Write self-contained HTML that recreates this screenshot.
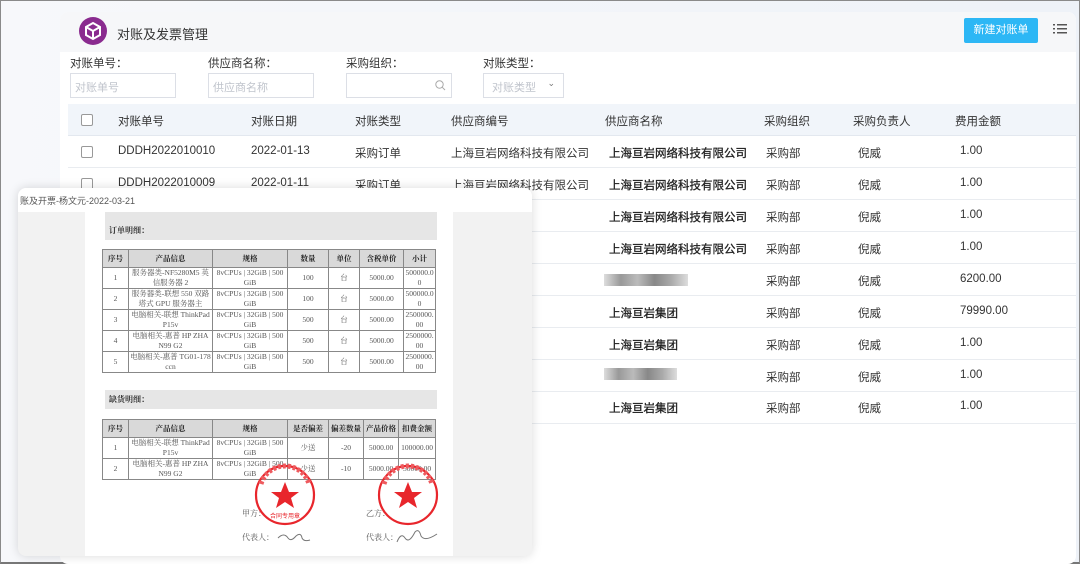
<!DOCTYPE html>
<html><head><meta charset="utf-8">
<style>
*{margin:0;padding:0;box-sizing:border-box}
body{width:1080px;height:564px;overflow:hidden;font-family:"Liberation Sans","Noto Sans CJK SC",sans-serif;background:#eef1f6;position:relative;color:#333}
.frame{position:absolute;inset:0;border:1px solid #8a8a8a;border-bottom:2px solid #777;background:linear-gradient(90deg,#f7f8fb,#eef2f8)}
.card{position:absolute;left:60px;top:12px;width:1016px;height:552px;background:#fff;border-radius:8px}
.hdr{position:absolute;left:0;top:0;width:1016px;height:40px;background:#f6f7f9;border-radius:8px 8px 0 0}
.a{position:absolute;white-space:nowrap}
.t{font-size:11.5px;color:#333}
.b{color:#222;-webkit-text-stroke:0.3px #222}
.inp{position:absolute;top:73px;height:25px;border:1px solid #dcdfe6;background:#fff;font-size:11px;color:#c0c4cc;padding:5px 4px}
.th{position:absolute;left:68px;top:104px;width:1008px;height:32px;background:#f1f5fa;border-bottom:1px solid #e3e8ef}
.row{position:absolute;left:68px;width:1008px;height:1px;background:#e9ecf0}
.cb{position:absolute;left:81px;width:12px;height:12px;border:1px solid #999;border-radius:2px;background:#fff}
.pop{position:absolute;left:18px;top:188px;width:514px;height:368px;background:#f2f2f2;border-radius:8px;box-shadow:0 0 10px rgba(0,0,0,.15);overflow:hidden}
.ptitle{position:absolute;left:0;top:0;width:514px;height:24px;background:#fff;font-size:9px;color:#555;padding:6px 2px}
.page{position:absolute;left:67px;top:24px;width:368px;height:344px;background:#fff}
table{border-collapse:collapse;position:absolute;font-family:"Liberation Serif","Noto Serif CJK SC",serif;font-size:7.5px;color:#555;table-layout:fixed}
td{border:1px solid #888;text-align:center;line-height:10px;padding:0 1px;word-break:break-all}
tr.h td{background:#d9d9d9;font-weight:bold;color:#222;height:18px}
.band{position:absolute;left:20px;width:332px;background:#e6e6e6;font-size:8px;font-weight:bold;color:#333;padding-left:4px;font-family:"Liberation Serif","Noto Serif CJK SC",serif}
.blur{position:absolute;height:12px;background:linear-gradient(90deg,#ddd,#999 20%,#bbb 40%,#888 60%,#aaa 80%,#ddd)}
</style></head><body>
<div class="frame"></div>
<div class="card">
 <div class="hdr"></div>
</div>
<svg class="a" style="left:79px;top:17px" width="28" height="28" viewBox="0 0 28 28"><circle cx="14" cy="14" r="14" fill="#8a2b8f"/><path d="M14 6 L21 10 L21 18 L14 22 L7 18 L7 10 Z" fill="none" stroke="#fff" stroke-width="2"/><path d="M7 10 L14 14 L21 10 M14 14 L14 22" stroke="#fff" stroke-width="2" fill="none"/></svg>
<div class="a" style="left:117px;top:24px;font-size:13px;color:#333">对账及发票管理</div>
<div class="a" style="left:964px;top:18px;width:74px;height:25px;background:#2db7f5;border-radius:2px;color:#fff;font-size:11px;text-align:center;line-height:25px">新建对账单</div>
<svg class="a" style="left:1053px;top:23px" width="14" height="12"><g fill="#555"><rect x="0" y="1" width="2" height="1.5"/><rect x="4" y="1" width="10" height="1.5"/><rect x="0" y="5" width="2" height="1.5"/><rect x="4" y="5" width="10" height="1.5"/><rect x="0" y="9" width="2" height="1.5"/><rect x="4" y="9" width="10" height="1.5"/></g></svg>

<div class="a t" style="left:70px;top:55px">对账单号：</div>
<div class="a t" style="left:208px;top:55px">供应商名称：</div>
<div class="a t" style="left:346px;top:55px">采购组织：</div>
<div class="a t" style="left:483px;top:55px">对账类型：</div>
<div class="inp" style="left:70px;width:106px">对账单号</div>
<div class="inp" style="left:208px;width:106px">供应商名称</div>
<div class="inp" style="left:346px;width:106px"><svg style="position:absolute;right:5px;top:6px" width="11" height="11"><circle cx="4.5" cy="4.5" r="3.7" fill="none" stroke="#aaa"/><path d="M7.3 7.3 L10 10" stroke="#aaa"/></svg></div>
<div class="inp" style="left:483px;width:81px;padding-left:8px">对账类型<span style="position:absolute;right:8px;top:4px;color:#777;font-size:9px">⌄</span></div>

<div class="th"></div>
<div class="cb" style="top:114px"></div>
<div class="a t" style="left:118px;top:113px">对账单号</div>
<div class="a t" style="left:251px;top:113px">对账日期</div>
<div class="a t" style="left:355px;top:113px">对账类型</div>
<div class="a t" style="left:451px;top:113px">供应商编号</div>
<div class="a t" style="left:605px;top:113px">供应商名称</div>
<div class="a t" style="left:764px;top:113px">采购组织</div>
<div class="a t" style="left:853px;top:113px">采购负责人</div>
<div class="a t" style="left:955px;top:113px">费用金额</div>

<div class="row" style="top:167px"></div><div class="row" style="top:199px"></div><div class="row" style="top:231px"></div><div class="row" style="top:263px"></div><div class="row" style="top:295px"></div><div class="row" style="top:327px"></div><div class="row" style="top:359px"></div><div class="row" style="top:391px"></div><div class="row" style="top:423px"></div>
<div class="cb" style="top:146px"></div>
<div class="a t" style="left:118px;top:145px">DDDH2022010010</div>
<div class="a t" style="left:251px;top:145px">2022-01-13</div>
<div class="a t" style="left:355px;top:145px">采购订单</div>
<div class="a t" style="left:451px;top:145px">上海亘岩网络科技有限公司</div>
<div class="cb" style="top:178px"></div>
<div class="a t" style="left:118px;top:177px">DDDH2022010009</div>
<div class="a t" style="left:251px;top:177px">2022-01-11</div>
<div class="a t" style="left:355px;top:177px">采购订单</div>
<div class="a t" style="left:451px;top:177px">上海亘岩网络科技有限公司</div>

<div class="a t b" style="left:609px;top:145px">上海亘岩网络科技有限公司</div>
<div class="a t b" style="left:609px;top:177px">上海亘岩网络科技有限公司</div>
<div class="a t b" style="left:609px;top:209px">上海亘岩网络科技有限公司</div>
<div class="a t b" style="left:609px;top:241px">上海亘岩网络科技有限公司</div>
<div class="blur" style="left:604px;top:274px;width:84px"></div>
<div class="a t b" style="left:609px;top:305px">上海亘岩集团</div>
<div class="a t b" style="left:609px;top:337px">上海亘岩集团</div>
<div class="blur" style="left:604px;top:368px;width:73px"></div>
<div class="a t b" style="left:609px;top:400px">上海亘岩集团</div>

<div class="a t" style="left:766px;top:145px">采购部</div><div class="a t" style="left:766px;top:177px">采购部</div><div class="a t" style="left:766px;top:209px">采购部</div><div class="a t" style="left:766px;top:241px">采购部</div><div class="a t" style="left:766px;top:273px">采购部</div><div class="a t" style="left:766px;top:305px">采购部</div><div class="a t" style="left:766px;top:337px">采购部</div><div class="a t" style="left:766px;top:369px">采购部</div><div class="a t" style="left:766px;top:400px">采购部</div>
<div class="a t" style="left:858px;top:145px">倪威</div><div class="a t" style="left:858px;top:177px">倪威</div><div class="a t" style="left:858px;top:209px">倪威</div><div class="a t" style="left:858px;top:241px">倪威</div><div class="a t" style="left:858px;top:273px">倪威</div><div class="a t" style="left:858px;top:305px">倪威</div><div class="a t" style="left:858px;top:337px">倪威</div><div class="a t" style="left:858px;top:369px">倪威</div><div class="a t" style="left:858px;top:400px">倪威</div>
<div class="a t" style="left:960px;top:145px">1.00</div><div class="a t" style="left:960px;top:177px">1.00</div><div class="a t" style="left:960px;top:209px">1.00</div><div class="a t" style="left:960px;top:241px">1.00</div><div class="a t" style="left:960px;top:273px">6200.00</div><div class="a t" style="left:960px;top:305px">79990.00</div><div class="a t" style="left:960px;top:337px">1.00</div><div class="a t" style="left:960px;top:369px">1.00</div><div class="a t" style="left:960px;top:400px">1.00</div>

<div class="pop">
 <div class="ptitle">账及开票-杨文元-2022-03-21</div>
 <div class="page">
  <div class="band" style="top:0;height:10px"></div>
  <div class="band" style="top:10px;height:18px;line-height:18px">订单明细：</div>
  <table style="left:17px;top:37px;width:333px">
   <colgroup><col style="width:26px"><col style="width:84px"><col style="width:75px"><col style="width:41px"><col style="width:31px"><col style="width:44px"><col style="width:32px"></colgroup>
   <tr class="h"><td>序号</td><td>产品信息</td><td>规格</td><td>数量</td><td>单位</td><td>含税单价</td><td>小计</td></tr>
   <tr style="height:21px"><td>1</td><td>服务器类-NF5280M5 英信服务器 2</td><td>8vCPUs | 32GiB | 500GiB</td><td>100</td><td>台</td><td>5000.00</td><td>500000.00</td></tr>
   <tr style="height:21px"><td>2</td><td>服务器类-联想 550 双路塔式 GPU 服务器主</td><td>8vCPUs | 32GiB | 500GiB</td><td>100</td><td>台</td><td>5000.00</td><td>500000.00</td></tr>
   <tr style="height:21px"><td>3</td><td>电脑相关-联想 ThinkPadP15v</td><td>8vCPUs | 32GiB | 500GiB</td><td>500</td><td>台</td><td>5000.00</td><td>2500000.00</td></tr>
   <tr style="height:21px"><td>4</td><td>电脑相关-惠普 HP ZHAN99 G2</td><td>8vCPUs | 32GiB | 500GiB</td><td>500</td><td>台</td><td>5000.00</td><td>2500000.00</td></tr>
   <tr style="height:21px"><td>5</td><td>电脑相关-惠普 TG01-178ccn</td><td>8vCPUs | 32GiB | 500GiB</td><td>500</td><td>台</td><td>5000.00</td><td>2500000.00</td></tr>
  </table>
  <div class="band" style="top:178px;height:19px;line-height:19px">缺货明细：</div>
  <table style="left:17px;top:207px;width:333px">
   <colgroup><col style="width:26px"><col style="width:84px"><col style="width:75px"><col style="width:41px"><col style="width:35px"><col style="width:35px"><col style="width:37px"></colgroup>
   <tr class="h"><td>序号</td><td>产品信息</td><td>规格</td><td>是否偏差</td><td>偏差数量</td><td>产品价格</td><td>扣费金额</td></tr>
   <tr style="height:20px"><td>1</td><td>电脑相关-联想 ThinkPadP15v</td><td>8vCPUs | 32GiB | 500GiB</td><td>少送</td><td>-20</td><td>5000.00</td><td>100000.00</td></tr>
   <tr style="height:20px"><td>2</td><td>电脑相关-惠普 HP ZHAN99 G2</td><td>8vCPUs | 32GiB | 500GiB</td><td>少送</td><td>-10</td><td>5000.00</td><td>50000.00</td></tr>
  </table>
  <div class="a" style="left:157px;top:296px;font-size:8px;color:#555;font-family:'Liberation Serif','Noto Serif CJK SC',serif">甲方：</div>
  <div class="a" style="left:281px;top:296px;font-size:8px;color:#555;font-family:'Liberation Serif','Noto Serif CJK SC',serif">乙方：</div>
  <div class="a" style="left:157px;top:320px;font-size:8px;color:#555;font-family:'Liberation Serif','Noto Serif CJK SC',serif">代表人：</div>
  <div class="a" style="left:281px;top:320px;font-size:8px;color:#555;font-family:'Liberation Serif','Noto Serif CJK SC',serif">代表人：</div>
  <svg class="a" style="left:0;top:0" width="368" height="344">
   <path d="M193 326 q6 -6 10 0 q3 4 8 -2 q5 -4 6 2 q2 4 8 2" fill="none" stroke="#777" stroke-width="1"/>
   <path d="M312 330 q4 -10 8 -4 q4 6 10 -6 q4 -4 6 4 q4 6 16 -2" fill="none" stroke="#777" stroke-width="1"/>
   <g fill="none" stroke="#e8262c" stroke-width="2.2"><circle cx="200" cy="283" r="29"/><circle cx="323" cy="283" r="29"/></g>
   <g fill="none" stroke="#ee5a5e" stroke-width="5" stroke-dasharray="3 2"><path d="M176 272 A25 25 0 0 1 224 272"/><path d="M299 272 A25 25 0 0 1 347 272"/></g>
   <polygon points="200,270 204,280 214,280 206,286 209,296 200,290 191,296 194,286 186,280 196,280" fill="#e8262c"/>
   <polygon points="323,270 327,280 337,280 329,286 332,296 323,290 314,296 317,286 309,280 319,280" fill="#e8262c"/>
   <text x="200" y="306" font-size="6" fill="#e8262c" text-anchor="middle" font-family="Noto Sans CJK SC,sans-serif">合同专用章</text>
  </svg>
 </div>
</div>
</body></html>
